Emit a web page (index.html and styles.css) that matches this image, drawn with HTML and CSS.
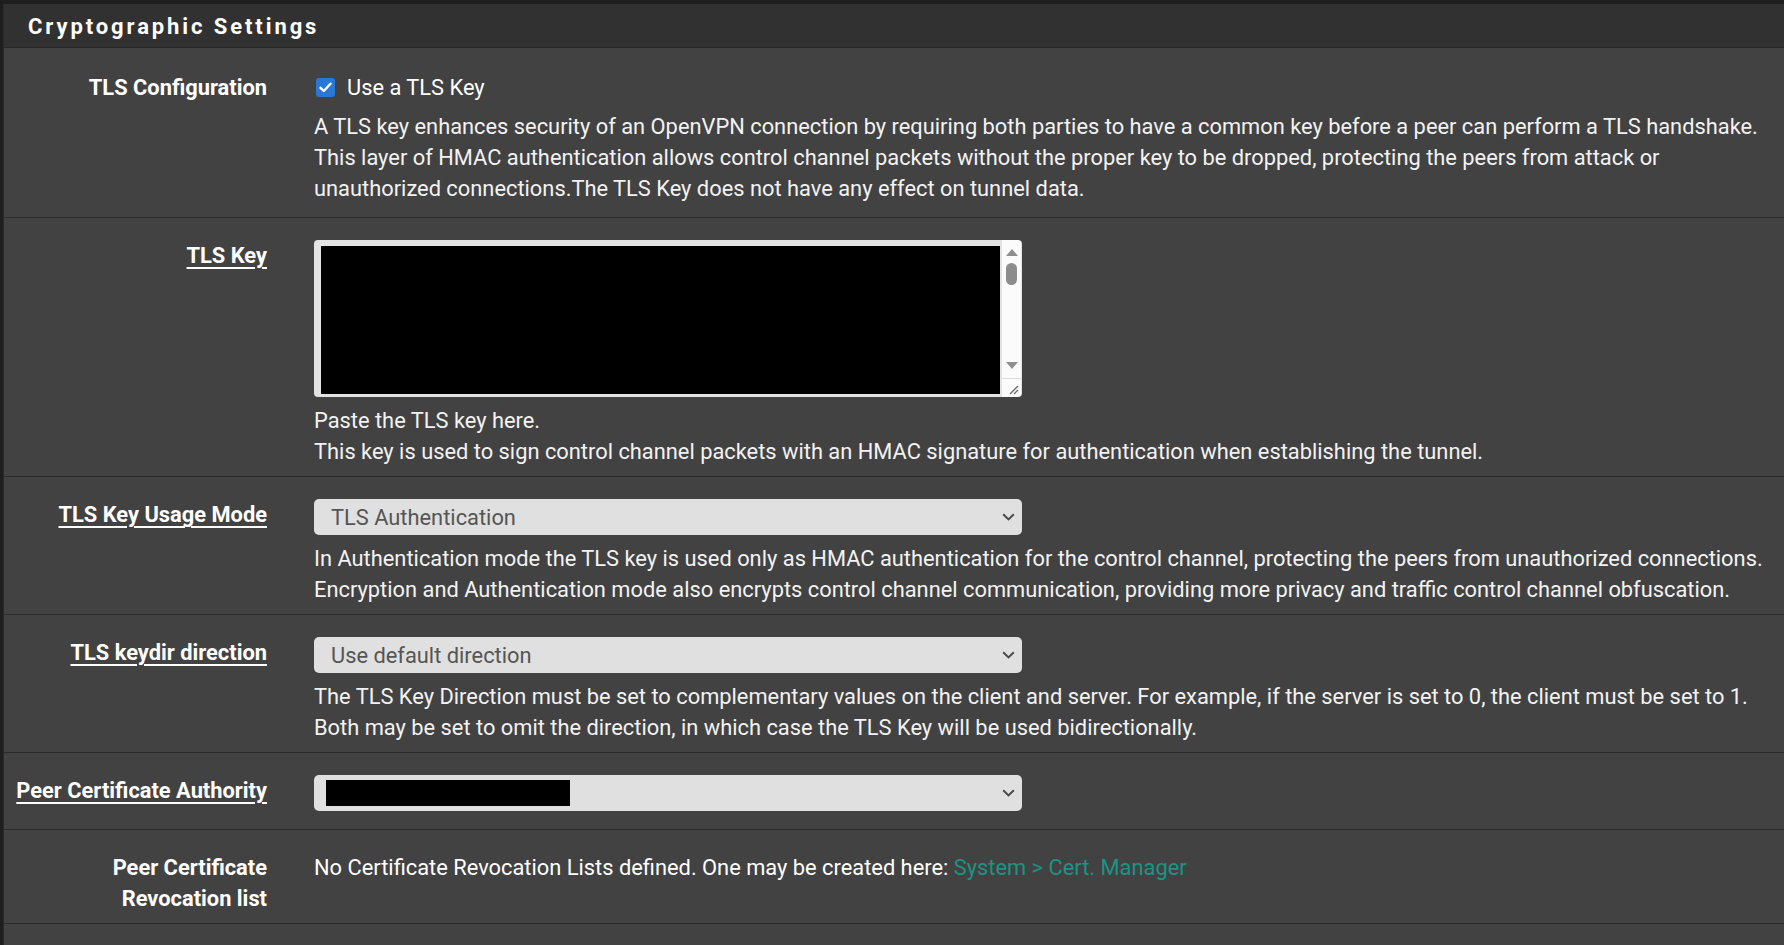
FILE: index.html
```html
<!DOCTYPE html>
<html>
<head>
<meta charset="utf-8">
<title>Cryptographic Settings</title>
<link rel="stylesheet" href="styles.css">
</head>
<body>
<div class="panel">
  <div class="panel-heading"><h2 class="panel-title">Cryptographic Settings</h2></div>
  <div class="panel-body">

    <div class="row row-first">
      <div class="label">TLS Configuration</div>
      <div class="content">
        <label class="check-line">
          <span class="checkbox"><svg width="13" height="11" viewBox="0 0 13 11"><path d="M1.5 5.8 L4.8 9 L11.5 1.8" fill="none" stroke="#fff" stroke-width="2.4" stroke-linecap="round" stroke-linejoin="round"/></svg></span>
          <span>Use a TLS Key</span>
        </label>
        <div class="help help-first">A TLS key enhances security of an OpenVPN connection by requiring both parties to have a common key before a peer can perform a TLS handshake.<br>This layer of HMAC authentication allows control channel packets without the proper key to be dropped, protecting the peers from attack or<br>unauthorized connections.The TLS Key does not have any effect on tunnel data.</div>
      </div>
    </div>

    <div class="row">
      <div class="label"><a class="label-link">TLS Key</a></div>
      <div class="content">
        <div class="textarea">
          <div class="ta-fill"></div>
          <div class="scrollbar">
            <span class="arr-up"></span>
            <span class="thumb"></span>
            <span class="sb-space"></span>
            <span class="arr-down"></span>
            <span class="resizer"><svg width="10" height="10" viewBox="0 0 10 10"><path d="M1 9 L9 1 M5 9 L9 5" stroke="#6b6b6b" stroke-width="1.4"/></svg></span>
          </div>
        </div>
        <div class="help">Paste the TLS key here.<br>This key is used to sign control channel packets with an HMAC signature for authentication when establishing the tunnel.</div>
      </div>
    </div>

    <div class="row">
      <div class="label"><a class="label-link">TLS Key Usage Mode</a></div>
      <div class="content">
        <div class="select"><span class="select-text">TLS Authentication</span><svg class="chev" width="13" height="8" viewBox="0 0 13 8"><path d="M1.2 1.2 L6.5 6.4 L11.8 1.2" fill="none" stroke="#4a4a4a" stroke-width="2"/></svg></div>
        <div class="help">In Authentication mode the TLS key is used only as HMAC authentication for the control channel, protecting the peers from unauthorized connections.<br>Encryption and Authentication mode also encrypts control channel communication, providing more privacy and traffic control channel obfuscation.</div>
      </div>
    </div>

    <div class="row">
      <div class="label"><a class="label-link">TLS keydir direction</a></div>
      <div class="content">
        <div class="select"><span class="select-text">Use default direction</span><svg class="chev" width="13" height="8" viewBox="0 0 13 8"><path d="M1.2 1.2 L6.5 6.4 L11.8 1.2" fill="none" stroke="#4a4a4a" stroke-width="2"/></svg></div>
        <div class="help">The TLS Key Direction must be set to complementary values on the client and server. For example, if the server is set to 0, the client must be set to 1.<br>Both may be set to omit the direction, in which case the TLS Key will be used bidirectionally.</div>
      </div>
    </div>

    <div class="row row-select-only">
      <div class="label"><a class="label-link">Peer Certificate Authority</a></div>
      <div class="content">
        <div class="select"><span class="redacted"></span><svg class="chev" width="13" height="8" viewBox="0 0 13 8"><path d="M1.2 1.2 L6.5 6.4 L11.8 1.2" fill="none" stroke="#4a4a4a" stroke-width="2"/></svg></div>
      </div>
    </div>

    <div class="row">
      <div class="label">Peer Certificate<br>Revocation list</div>
      <div class="content">
        <div class="text-line">No Certificate Revocation Lists defined. One may be created here: <a class="link">System &gt; Cert. Manager</a></div>
      </div>
    </div>

    <div class="filler"></div>
  </div>
</div>
</body>
</html>
```

FILE: styles.css
```css
html, body {
  margin: 0;
  padding: 0;
}
body {
  background: #1e1e1e;
  font-family: Roboto, "Liberation Sans", Arial, sans-serif;
  color: #ffffff;
  overflow: hidden;
  height: 945px;
}
.panel {
  margin: 4px 0 0 3px;
  background: #424242;
  height: 941px;
  border-left: 1px solid #2a2a2a;
}
.panel-heading {
  background: #313131;
  height: 44px;
  border-bottom: 1px solid #252525;
  box-sizing: border-box;
  padding: 2px 0 0 24px;
  display: flex;
  align-items: center;
}
.panel-title {
  margin: 0;
  font-size: 22px;
  font-weight: 700;
  letter-spacing: 2.9px;
  color: #ffffff;
  line-height: 40px;
}
.panel-body {
  display: flex;
  flex-direction: column;
}
.row {
  display: grid;
  grid-template-columns: 263px 1fr;
  column-gap: 47px;
  padding: 22px 0 9px 0;
  border-bottom: 1px solid #2b2b2b;
  font-size: 21.85px;
  line-height: 31px;
}
.row-first {
  padding-top: 24px;
  padding-bottom: 13px;
}
.row-select-only {
  padding-bottom: 18px;
}
.label {
  text-align: right;
  font-weight: 700;
  color: #ffffff;
}
.label-link {
  color: #ffffff;
  text-decoration: underline;
  text-decoration-thickness: 2px;
  text-underline-offset: 4px;
}
.content {
  min-width: 0;
  white-space: nowrap;
}
.check-line {
  display: flex;
  align-items: center;
  gap: 12px;
  padding-left: 2px;
}
.checkbox {
  width: 19px;
  height: 19px;
  border-radius: 3px;
  background: #2a78d6;
  display: flex;
  align-items: center;
  justify-content: center;
}
.help {
  margin-top: 8px;
  color: #f2f2f2;
}
.help-first {
  margin-top: 8px;
}
.textarea {
  width: 708px;
  height: 157px;
  box-sizing: border-box;
  background: #e3e3e3;
  border-radius: 4px;
  display: flex;
  padding-right: 1px;
}
.ta-fill {
  flex: 1;
  margin: 6px 2px 3px 7px;
  background: #000000;
}
.scrollbar {
  width: 19px;
  background: #fbfbfb;
  border-radius: 0 4px 4px 0;
  display: flex;
  flex-direction: column;
  align-items: center;
}
.arr-up {
  margin-top: 9px;
  width: 0;
  height: 0;
  border-left: 6px solid transparent;
  border-right: 6px solid transparent;
  border-bottom: 7px solid #8f8f8f;
}
.thumb {
  margin-top: 7px;
  width: 11px;
  height: 22px;
  border-radius: 6px;
  background: #8c8c8c;
}
.sb-space {
  flex: 1;
}
.arr-down {
  width: 0;
  height: 0;
  border-left: 6px solid transparent;
  border-right: 6px solid transparent;
  border-top: 7px solid #8f8f8f;
  margin-bottom: 9px;
}
.resizer {
  width: 100%;
  height: 19px;
  box-sizing: border-box;
  border-top: 1px solid #dcdcdc;
  display: flex;
  align-items: flex-end;
  justify-content: flex-end;
  padding: 0 2px 2px 0;
}
.select {
  width: 708px;
  height: 36px;
  box-sizing: border-box;
  background: #e0e0e0;
  border-radius: 5px;
  display: flex;
  align-items: center;
  padding: 0 7px 0 17px;
}
.select-text {
  flex: 1;
  color: #555555;
  font-size: 21.85px;
}
.chev {
  margin-left: auto;
}
.redacted {
  display: block;
  width: 244px;
  height: 26px;
  background: #000000;
  margin-left: -5px;
}
.text-line {
  color: #ffffff;
}
.link {
  color: #1a9584;
  text-decoration: none;
}
.filler {
  flex: 1;
}
```
